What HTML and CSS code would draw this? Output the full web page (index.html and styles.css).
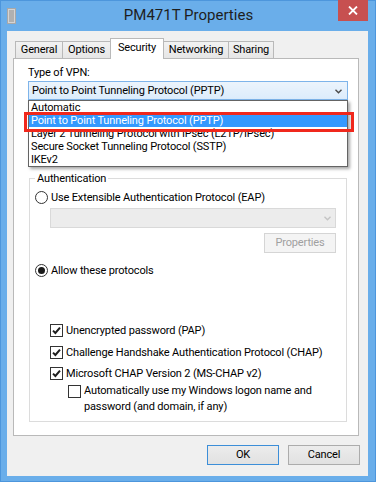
FILE: index.html
```html
<!DOCTYPE html>
<html lang="en">
<head>
    <meta charset="UTF-8">
    <title>PM471T Properties</title>
    <link rel="stylesheet" href="styles.css">
</head>
<body>
    <div class="window">
        <div class="titlebar">
            <svg class="app-icon" width="9" height="16" viewBox="0 0 9 16">
                <rect x="0.5" y="0.5" width="8" height="15" fill="#d4d4d4" stroke="#a8a8a8"/>
                <path d="M2 3h5M2 5h5M2 7h5M2 9h5M2 11h5M2 13h5" stroke="#8c8c8c" stroke-width="1"/>
            </svg>
            <div class="title">PM471T Properties</div>
            <div class="close">
                <svg width="10" height="9" viewBox="0 0 10 9">
                    <path d="M1 0.5L9 8.5M9 0.5L1 8.5" stroke="#ffffff" stroke-width="1.8"/>
                </svg>
            </div>
        </div>
        <div class="client">
            <div class="tabs">
                <div class="tab tab-general">General</div>
                <div class="tab tab-options">Options</div>
                <div class="tab tab-security active">Security</div>
                <div class="tab tab-networking">Networking</div>
                <div class="tab tab-sharing">Sharing</div>
            </div>
            <div class="panel">
                <div class="label">Type of VPN:</div>
                <div class="combo">
                    <span>Point to Point Tunneling Protocol (PPTP)</span>
                    <svg class="chevron" width="7" height="5" viewBox="0 0 7 5">
                        <path d="M0.5 0.8L3.5 3.8L6.5 0.8" fill="none" stroke="#4a4a4a" stroke-width="1.4"/>
                    </svg>
                    <ul class="combo-list">
                        <li>Automatic</li>
                        <li class="selected">Point to Point Tunneling Protocol (PPTP)</li>
                        <li>Layer 2 Tunneling Protocol with IPsec (L2TP/IPsec)</li>
                        <li>Secure Socket Tunneling Protocol (SSTP)</li>
                        <li>IKEv2</li>
                    </ul>
                    <div class="marker"></div>
                </div>
                <fieldset class="group">
                    <legend>Authentication</legend>
                    <div class="option-row eap-row">
                        <span class="radio"></span>
                        <span>Use Extensible Authentication Protocol (EAP)</span>
                    </div>
                    <div class="eap-options">
                        <div class="select-disabled">
                            <svg width="7" height="5" viewBox="0 0 7 5">
                                <path d="M0.5 0.8L3.5 3.8L6.5 0.8" fill="none" stroke="#c4c4c4" stroke-width="1.4"/>
                            </svg>
                        </div>
                        <div class="btn btn-disabled">Properties</div>
                    </div>
                    <div class="option-row allow-row">
                        <span class="radio on"></span>
                        <span>Allow these protocols</span>
                    </div>
                    <div class="checks">
                        <div class="option-row check-row">
                            <span class="checkbox"><svg width="11" height="11" viewBox="0 0 11 11"><path d="M2 5.6L4.4 8L9 2.6" fill="none" stroke="#1e1e1e" stroke-width="2"/></svg></span>
                            <span>Unencrypted password (PAP)</span>
                        </div>
                        <div class="option-row check-row">
                            <span class="checkbox"><svg width="11" height="11" viewBox="0 0 11 11"><path d="M2 5.6L4.4 8L9 2.6" fill="none" stroke="#1e1e1e" stroke-width="2"/></svg></span>
                            <span>Challenge Handshake Authentication Protocol (CHAP)</span>
                        </div>
                        <div class="option-row check-row">
                            <span class="checkbox"><svg width="11" height="11" viewBox="0 0 11 11"><path d="M2 5.6L4.4 8L9 2.6" fill="none" stroke="#1e1e1e" stroke-width="2"/></svg></span>
                            <span>Microsoft CHAP Version 2 (MS-CHAP v2)</span>
                        </div>
                        <div class="auto-row">
                            <span class="checkbox"></span>
                            <span>Automatically use my Windows logon name and<br>password (and domain, if any)</span>
                        </div>
                    </div>
                </fieldset>
            </div>
            <div class="actions">
                <div class="btn btn-default">OK</div>
                <div class="btn">Cancel</div>
            </div>
        </div>
    </div>
</body>
</html>
```

FILE: styles.css
```css
:root {
    --frame-color: #6aaeea;
    --frame-edge: #4d96dc;
    --face-color: #f0f0f0;
    --tab-border: #b9b9b9;
}
body {
    margin: 0;
    font-family: Roboto, "Liberation Sans", sans-serif;
    font-size: 11px;
    letter-spacing: -0.15px;
    color: #000000;
}
.window {
    width: 376px;
    height: 482px;
    box-sizing: border-box;
    background-color: var(--frame-color);
    border: 1px solid var(--frame-edge);
    padding: 0 7px 5px 6px;
    display: flex;
    flex-direction: column;
}
.titlebar {
    height: 30px;
    display: grid;
    grid-template-columns: 1fr auto 1fr;
}
.app-icon {
    margin-top: 7px;
}
.title {
    font-size: 15px;
    letter-spacing: 0;
    color: #1e1e1e;
    line-height: 29px;
    padding-left: 2px;
}
.close {
    justify-self: end;
    width: 30px;
    height: 21px;
    margin-top: -1px;
    background-color: #c75050;
    display: flex;
    justify-content: center;
    align-items: center;
}
.client {
    flex: 1;
    background-color: var(--face-color);
    padding: 7px 0 11px 0;
    display: flex;
    flex-direction: column;
}
.tabs {
    height: 20px;
    padding-left: 8px;
    display: flex;
    align-items: flex-end;
}
.tab {
    height: 17px;
    box-sizing: border-box;
    border: 1px solid var(--tab-border);
    border-bottom: none;
    margin-left: -1px;
    background: linear-gradient(#f2f2f2, #e6e6e6);
    text-align: center;
    line-height: 16px;
}
.tab:first-child {
    margin-left: 0;
}
.tab.active {
    height: 21px;
    margin-bottom: -1px;
    background: #ffffff;
    position: relative;
    z-index: 1;
    line-height: 17px;
}
.tab-general { width: 48px; }
.tab-options { width: 49px; }
.tab-security { width: 54px; }
.tab-networking { width: 66px; }
.tab-sharing { width: 46px; }
.panel {
    height: 378px;
    box-sizing: border-box;
    margin: 0 9px 0 6px;
    border: 1px solid var(--tab-border);
    background-color: #ffffff;
    padding: 6px 10px 0 14px;
}
.label {
    line-height: 15px;
    margin-bottom: 1px;
}
.combo {
    position: relative;
    height: 19px;
    box-sizing: border-box;
    border: 1px solid #7eb4ea;
    background: linear-gradient(#ecf4fc, #dcecfc);
    padding: 0 5px 0 3px;
    display: flex;
    justify-content: space-between;
    align-items: center;
}
.chevron {
    margin-top: 1px;
}
.combo-list {
    position: absolute;
    top: 18px;
    left: -1px;
    width: 320px;
    box-sizing: border-box;
    margin: 0;
    padding: 0;
    list-style: none;
    background-color: #ffffff;
    border: 1px solid #646464;
    box-shadow: 2px 2px 3px rgba(0, 0, 0, 0.35);
    z-index: 2;
}
.combo-list li {
    line-height: 13px;
    height: 13px;
    padding-left: 2px;
}
.combo-list li.selected {
    background-color: #3399ff;
    color: #ffffff;
}
.marker {
    position: absolute;
    top: 30px;
    left: -5px;
    width: 330px;
    height: 20px;
    box-sizing: border-box;
    border: 3px solid #f0281c;
    z-index: 3;
}
.group {
    margin: 71px 1px 0 1px;
    padding: 0 0 6px 5px;
    border: 1px solid #dcdcdc;
}
.group legend {
    padding: 0 2px;
    line-height: 15px;
}
.option-row {
    display: flex;
    align-items: center;
    height: 15px;
}
.option-row > span:last-child,
.auto-row > span:last-child {
    margin-left: 3px;
}
.eap-row {
    margin-top: 4px;
}
.radio {
    width: 13px;
    height: 13px;
    box-sizing: border-box;
    border: 1px solid #333333;
    border-radius: 50%;
    background-color: #ffffff;
    display: flex;
    justify-content: center;
    align-items: center;
}
.radio.on::after {
    content: '';
    width: 7px;
    height: 7px;
    border-radius: 50%;
    background-color: #1a1a1a;
}
.eap-options {
    width: 286px;
    margin-left: 15px;
    display: flex;
    flex-direction: column;
    align-items: flex-end;
}
.select-disabled {
    width: 100%;
    height: 20px;
    margin-top: 3px;
    box-sizing: border-box;
    border: 1px solid #d9d9d9;
    background-color: #ececec;
    display: flex;
    justify-content: flex-end;
    align-items: center;
    padding-right: 4px;
}
.btn {
    width: 72px;
    height: 20px;
    box-sizing: border-box;
    border: 1px solid #acacac;
    background: linear-gradient(#ececec, #e1e1e1);
    text-align: center;
    line-height: 18px;
}
.btn-disabled {
    margin-top: 5px;
    border-color: #d5d5d5;
    background: #f4f4f4;
    color: #a0a0a0;
}
.btn-default {
    border-color: #3c8ed8;
}
.allow-row {
    margin-top: 10px;
}
.checks {
    margin-top: 45px;
    margin-left: 15px;
    display: flex;
    flex-direction: column;
    gap: 6px;
}
.checks .check-row:first-child {
    margin-bottom: 1px;
}
.checkbox {
    width: 13px;
    height: 13px;
    flex: none;
    box-sizing: border-box;
    border: 1px solid #333333;
    background-color: #ffffff;
    display: flex;
    justify-content: center;
    align-items: center;
}
.auto-row {
    display: flex;
    align-items: flex-start;
    margin-top: -4px;
    margin-left: 18px;
    line-height: 16px;
}
.auto-row .checkbox {
    margin-top: 2px;
}
.actions {
    margin: 9px 8px 0 0;
    display: flex;
    justify-content: flex-end;
    gap: 9px;
}
```
